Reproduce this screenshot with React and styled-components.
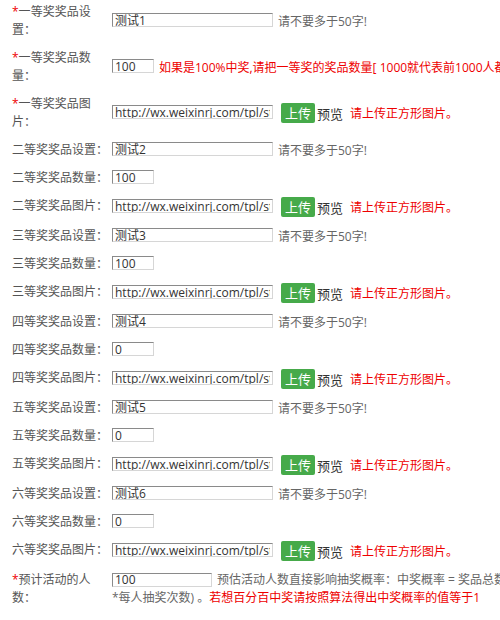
import React from "react";
import styled, { createGlobalStyle } from "styled-components";

const levels = [
  { no: "一", name: "测试1", count: "100", required: true },
  { no: "二", name: "测试2", count: "100" },
  { no: "三", name: "测试3", count: "100" },
  { no: "四", name: "测试4", count: "0" },
  { no: "五", name: "测试5", count: "0" },
  { no: "六", name: "测试6", count: "0" },
];

const imgUrl = "http://wx.weixinrj.com/tpl/static/images/prize.png";

const App = () => {
  return (
    <>
      <GlobalStyle />
      <Form>
        {levels.map((lv) => (
          <React.Fragment key={lv.no}>
            <Row>
              <Label>
                {lv.required && <Star>*</Star>}
                {lv.no}等奖奖品设置：
              </Label>
              <Field>
                <TextInput $w={161} defaultValue={lv.name} />
                <Hint>请不要多于50字!</Hint>
              </Field>
            </Row>
            <Row>
              <Label>
                {lv.required && <Star>*</Star>}
                {lv.no}等奖奖品数量：
              </Label>
              <Field>
                <TextInput $w={42} defaultValue={lv.count} />
                {lv.required && (
                  <Warn $gap={5}>
                    如果是100%中奖,请把一等奖的奖品数量[ 1000就代表前1000人都能中奖 ]
                  </Warn>
                )}
              </Field>
            </Row>
            <Row>
              <Label>
                {lv.required && <Star>*</Star>}
                {lv.no}等奖奖品图片：
              </Label>
              <Field>
                <TextInput $w={161} defaultValue={imgUrl} />
                <UploadButton type="button">上传</UploadButton>
                <Preview>预览</Preview>
                <Warn $gap={7}>请上传正方形图片。</Warn>
              </Field>
            </Row>
          </React.Fragment>
        ))}
        <Row>
          <Label>
            <Star>*</Star>预计活动的人数：
          </Label>
          <NoteField>
            <TextInput $w={100} defaultValue="100" />
            <Hint>预估活动人数直接影响抽奖概率：中奖概率 = 奖品总数/(预估活动人数</Hint>
            <br />
            *每人抽奖次数) 。<Warn $gap={0}>若想百分百中奖请按照算法得出中奖概率的值等于1</Warn>
          </NoteField>
        </Row>
      </Form>
    </>
  );
};

export default App;

const GlobalStyle = createGlobalStyle`
  html, body {
    margin: 0;
    overflow: hidden;
    background: #fff;
  }
  body {
    font-family: "Open Sans", "Noto Sans CJK SC", sans-serif;
    font-size: 12px;
    color: #555;
  }
`;

const Form = styled.div`
  display: flex;
  flex-direction: column;
  margin-top: -2px;
  padding-left: 12px;
`;

const Row = styled.div`
  display: grid;
  grid-template-columns: 98px max-content;
  column-gap: 2px;
  align-items: center;
  padding: 5px 0;
`;

const Label = styled.div`
  line-height: 18px;
  color: #555;
  align-self: start;
  min-height: 18px;
`;

const Star = styled.span`
  color: #e00;
`;

const Field = styled.div`
  display: flex;
  align-items: center;
  white-space: nowrap;
  min-height: 18px;
`;

const NoteField = styled.div`
  align-self: start;
  line-height: 18px;
  white-space: nowrap;
  color: #666;
`;

const TextInput = styled.input`
  box-sizing: border-box;
  width: ${(p) => p.$w}px;
  height: 14px;
  margin: 0 0 2px;
  padding: 0 2px;
  border: 1px solid;
  border-color: #8a8a8a #d6d6d6 #d6d6d6 #8a8a8a;
  font-family: "Open Sans", "Noto Sans CJK SC", sans-serif;
  font-size: 12px;
  line-height: 12px;
  color: #333;
  vertical-align: middle;
  outline: none;
`;

const Hint = styled.span`
  margin-left: 5px;
  color: #666;
`;

const Warn = styled.span`
  margin-left: ${(p) => p.$gap}px;
  color: #e00;
`;

const UploadButton = styled.button`
  height: 20px;
  margin-left: 8px;
  padding: 0 4px;
  border: none;
  border-radius: 2px;
  background: #46aa4a;
  color: #fff;
  font-family: "Noto Sans CJK SC", sans-serif;
  font-size: 13px;
  line-height: 20px;
`;

const Preview = styled.span`
  margin-left: 2px;
  color: #333;
  font-size: 13px;
`;
